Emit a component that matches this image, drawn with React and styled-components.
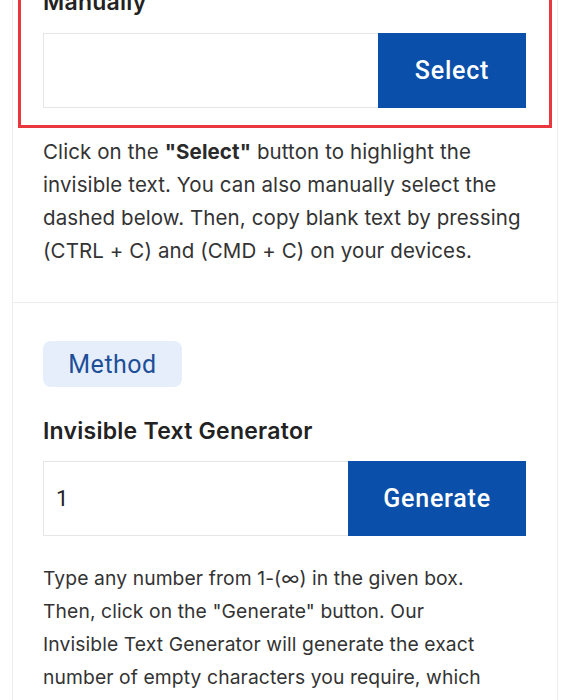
import React from "react";
import styled, { createGlobalStyle } from "styled-components";

const Global = createGlobalStyle`
  html, body { margin: 0; padding: 0; background: #ffffff; }
  body { font-family: "Inter", "Liberation Sans", sans-serif; overflow: hidden; }
  * { box-sizing: border-box; }
`;

const Card = styled.div`
  margin: 0 12px;
  width: 546px;
  border-left: 1px solid #ececec;
  border-right: 1px solid #ececec;
  background: #fff;
`;

const Section = styled.section`
  padding: ${(p) => p.$pad};
  border-top: ${(p) => (p.$divider ? "1px solid #ececec" : "none")};
`;

const Highlight = styled.div`
  margin: -30px 5px 0 5px;
  border: 3px solid #e8383d;
  padding: 15px 23px 17px 22px;
`;

const Heading = styled.h3`
  margin: 0 0 ${(p) => p.$mb || 0}px;
  font-family: "Inter", "Liberation Sans", sans-serif;
  font-weight: 600;
  font-size: 23px;
  line-height: 28px;
  color: #222;
  letter-spacing: 0.25px;
`;

const Row = styled.div`
  display: grid;
  grid-template-columns: 1fr ${(p) => p.$btn}px;
  height: 75px;
`;

const Field = styled.div`
  border: 1px solid #e6e6e6;
  border-right: none;
  background: #fff;
  display: flex;
  align-items: center;
  padding-left: 12px;
  font-family: "Roboto", "Liberation Sans", sans-serif;
  font-size: 22px;
  color: #222;
`;

const Button = styled.button`
  border: none;
  background: #0a4fa9;
  color: #fff;
  font-family: "Roboto", "Open Sans", sans-serif;
  font-weight: 500;
  font-size: 25px;
  letter-spacing: 0.8px;
  padding: 0;
  cursor: pointer;
`;

const Text = styled.p`
  margin: ${(p) => p.$mt || 0}px 0 0;
  padding: 0 ${(p) => p.$pr || 20}px 0 30px;
  font-family: "Inter", "Liberation Sans", sans-serif;
  font-size: ${(p) => p.$size || 20}px;
  line-height: 33px;
  color: #333;
  letter-spacing: 0.1px;
  b { font-weight: 700; color: #2a2a2a; }
`;

const Inner = styled.div`
  padding: 0 31px 0 30px;
`;

const Badge = styled.span`
  display: inline-flex;
  align-items: center;
  justify-content: center;
  width: 139px;
  height: 46px;
  border-radius: 8px;
  background: #e6eefc;
  color: #1d4f98;
  font-family: "Roboto", "Open Sans", sans-serif;
  font-size: 25px;
  font-weight: 400;
  letter-spacing: 0.5px;
  margin-bottom: 30px;
`;

export default function App() {
  return (
    <>
      <Global />
      <Card>
        <Section $pad="0 0 35px 0">
          <Highlight>
            <Heading $mb={17}>Manually</Heading>
            <Row $btn={148}>
              <Field aria-label="invisible text" />
              <Button>Select</Button>
            </Row>
          </Highlight>
          <Text $mt={7} $pr={22} $size={20.5}>
            Click on the <b>"Select"</b> button to highlight the invisible text. You can also manually select the dashed below. Then, copy blank text by pressing (CTRL + C) and (CMD + C) on your devices.
          </Text>
        </Section>
        <Section $divider $pad="38px 0 40px 0">
          <Inner>
            <Badge>Method</Badge>
            <Heading $mb={16}>Invisible Text Generator</Heading>
            <Row $btn={178}>
              <Field>1</Field>
              <Button>Generate</Button>
            </Row>
          </Inner>
          <Text $mt={26} $pr={66} $size={19.3}>
            Type any number from 1-(∞) in the given box. Then, click on the "Generate" button. Our Invisible Text Generator will generate the exact number of empty characters you require, which
          </Text>
        </Section>
      </Card>
    </>
  );
}
